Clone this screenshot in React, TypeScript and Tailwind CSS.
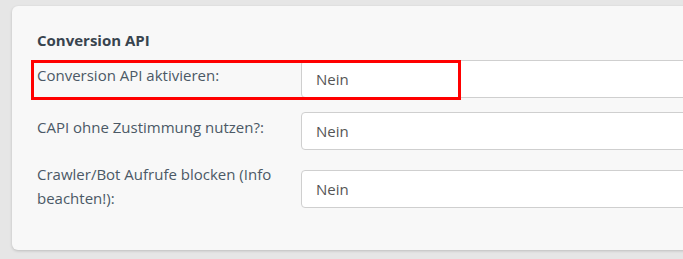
export default function App() {
  const font = { fontFamily: '"Open Sans", "Liberation Sans", sans-serif' };
  return (
    <div
      className="relative h-[259px] w-[683px] overflow-hidden bg-[#e6e6e6] pl-[12px] pt-[6px]"
      style={font}
    >
      <div className="h-[244px] w-[720px] rounded-[6px] bg-[#f8f8f8] px-[25px] pt-[24px] shadow-[0_1px_3px_rgba(0,0,0,0.18)]">
        <h2 className="text-[15px] font-bold leading-[20px] text-[#38444f]">Conversion API</h2>

        <div className="mt-[10px] flex items-start">
          <label className="w-[264px] shrink-0 pt-[3px] text-[15px] leading-[24px] text-[#4b5966]">
            Conversion API aktivieren:
          </label>
          <div className="flex h-[38px] flex-1 items-center rounded-[4px] border border-[#cfcfcf] bg-white pl-[14px] text-[15px] text-[#555]">
            Nein
          </div>
        </div>

        <div className="mt-[14px] flex items-start">
          <label className="w-[264px] shrink-0 pt-[3px] text-[15px] leading-[24px] text-[#4b5966]">
            CAPI ohne Zustimmung nutzen?:
          </label>
          <div className="flex h-[38px] flex-1 items-center rounded-[4px] border border-[#cfcfcf] bg-white pl-[14px] text-[15px] text-[#555]">
            Nein
          </div>
        </div>

        <div className="mt-[12px] flex items-start">
          <label className="w-[264px] shrink-0 pr-[20px] text-[15px] leading-[24px] text-[#4b5966]">
            Crawler/Bot Aufrufe blocken (Info beachten!):
          </label>
          <div className="mt-[8px] flex h-[38px] flex-1 items-center rounded-[4px] border border-[#cfcfcf] bg-white pl-[14px] text-[15px] text-[#555]">
            Nein
          </div>
        </div>
      </div>

      <div className="absolute left-[31px] top-[60px] h-[40px] w-[430px] border-[3px] border-[#ff0000]" />
    </div>
  );
}
